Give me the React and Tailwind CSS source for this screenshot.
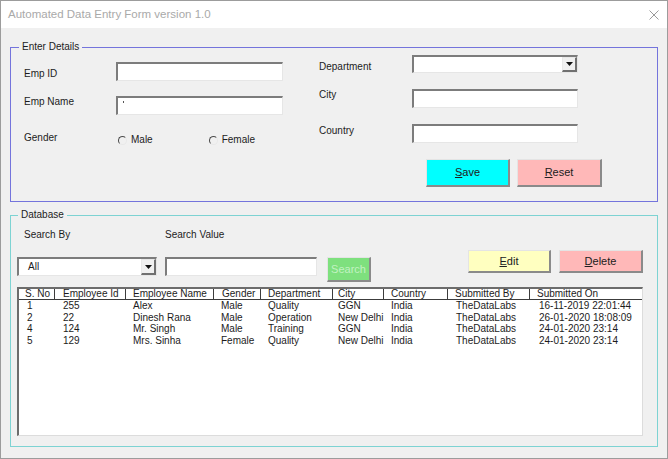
import React from 'react';

const columns = [
  { label: 'S. No', w: 35, hp: 'pl-[6px]', dp: 'pl-[8px]' },
  { label: 'Employee Id', w: 71, hp: 'pl-[8px]', dp: 'pl-[9px]' },
  { label: 'Employee Name', w: 88, hp: 'pl-[7px]', dp: 'pl-[8px]' },
  { label: 'Gender', w: 47, hp: 'pl-[8px]', dp: 'pl-[8px]' },
  { label: 'Department', w: 72, hp: 'pl-[7px]', dp: 'pl-[8px]' },
  { label: 'City', w: 51, hp: 'pl-[5px]', dp: 'pl-[6px]' },
  { label: 'Country', w: 64, hp: 'pl-[7px]', dp: 'pl-[8px]' },
  { label: 'Submitted By', w: 82, hp: 'pl-[7px]', dp: 'pl-[9px]' },
  { label: 'Submitted On', w: 113, hp: 'pl-[7px]', dp: 'pl-[10px]' },
];

const rows = [
  ['1', '255', 'Alex', 'Male', 'Quality', 'GGN', 'India', 'TheDataLabs', '16-11-2019 22:01:44'],
  ['2', '22', 'Dinesh Rana', 'Male', 'Operation', 'New Delhi', 'India', 'TheDataLabs', '26-01-2020 18:08:09'],
  ['4', '124', 'Mr. Singh', 'Male', 'Training', 'GGN', 'India', 'TheDataLabs', '24-01-2020 23:14'],
  ['5', '129', 'Mrs. Sinha', 'Female', 'Quality', 'New Delhi', 'India', 'TheDataLabs', '24-01-2020 23:14'],
];

const inputCls =
  'bg-white border-t-2 border-l-2 border-r border-b border-t-[#7c7c7c] border-l-[#7c7c7c] border-r-[#e6e6e6] border-b-[#e6e6e6]';

const btnCls =
  'flex items-center justify-center text-[11px] text-[#202020] border-t border-l border-r-2 border-b-2 border-t-[#e4e4e4] border-l-[#e4e4e4] border-r-[#8a8a8a] border-b-[#8a8a8a]';

function Arrow() {
  return (
    <div className="flex h-full w-[15px] items-center justify-center border-l border-t border-r-2 border-b-2 border-l-[#e8e8e8] border-t-[#e8e8e8] border-r-[#707070] border-b-[#707070] bg-[#f0f0f0]">
      <svg width="7" height="4" viewBox="0 0 7 4">
        <polygon points="0,0 7,0 3.5,4" fill="#111" />
      </svg>
    </div>
  );
}

function Radio({ label, className }) {
  return (
    <div className={`flex items-center ${className}`}>
      <span className="h-[9px] w-[9px] rounded-full border border-t-[#4a4a4a] border-l-[#4a4a4a] border-r-[#e8e8e8] border-b-[#e8e8e8]" />
      <span className="ml-[4px] text-[10px] leading-[12px]">{label}</span>
    </div>
  );
}

function U({ c, rest }) {
  return (
    <span>
      <span className="underline underline-offset-1">{c}</span>
      {rest}
    </span>
  );
}

export default function App() {
  return (
    <div className="flex h-[459px] w-[668px] flex-col overflow-hidden border border-[#9c9c9c] bg-[#f0f0f0] font-['Liberation_Sans',Arial,sans-serif] text-[#1c1c1c]">
      {/* title bar */}
      <div className="flex h-[27px] shrink-0 items-center justify-between bg-white pl-[7px] pr-[7px]">
        <span className="text-[11.5px] text-[#a9a9a9]">Automated Data Entry Form version 1.0</span>
        <svg width="10" height="10" viewBox="0 0 10 10" className="mr-[1px]">
          <path d="M0.5 0.5 L9.5 9.5 M9.5 0.5 L0.5 9.5" stroke="#9a9a9a" strokeWidth="1" />
        </svg>
      </div>

      {/* Enter Details */}
      <div className="relative ml-[9px] mt-[19px] flex h-[155px] w-[648px] shrink-0 border border-[#7474dc]">
        <span className="absolute -top-[7px] left-[8px] bg-[#f0f0f0] px-[3px] text-[10px] leading-[12px]">Enter Details</span>

        <div className="ml-[13px] flex w-[295px] flex-col pt-[14px]">
          <div className="flex items-start">
            <span className="mt-[6px] w-[92px] text-[10px] leading-[12px]">Emp ID</span>
            <div className={`h-[19px] w-[167px] ${inputCls}`} />
          </div>
          <div className="mt-[15px] flex items-start">
            <span className="mt-[0px] w-[92px] text-[10px] leading-[12px]">Emp Name</span>
            <div className={`relative h-[19px] w-[167px] ${inputCls}`}>
              <span className="absolute left-[5px] top-[3px] h-[2px] w-[1px] bg-[#555]" />
            </div>
          </div>
          <div className="mt-[17px] flex items-start">
            <span className="w-[94px] text-[10px] leading-[12px]">Gender</span>
            <Radio label="Male" className="mt-[2px]" />
            <Radio label="Female" className="mt-[2px] ml-[56px]" />
          </div>
        </div>

        <div className="flex flex-col pt-[7px]">
          <div className="flex items-start">
            <span className="mt-[6px] w-[93px] text-[10px] leading-[12px]">Department</span>
            <div className={`flex h-[18px] w-[166px] justify-end ${inputCls}`}>
              <Arrow />
            </div>
          </div>
          <div className="mt-[16px] flex items-start">
            <span className="w-[93px] text-[10px] leading-[12px]">City</span>
            <div className={`h-[19px] w-[166px] ${inputCls}`} />
          </div>
          <div className="mt-[16px] flex items-start">
            <span className="mt-[1px] w-[93px] text-[10px] leading-[12px]">Country</span>
            <div className={`h-[19px] w-[166px] ${inputCls}`} />
          </div>
          <div className="ml-[107px] mt-[16px] flex gap-[7px]">
            <button type="button" className={`h-[28px] w-[84px] bg-[#00ffff] ${btnCls}`}>
              <U c="S" rest="ave" />
            </button>
            <button type="button" className={`h-[28px] w-[85px] bg-[#ffb8b8] ${btnCls}`}>
              <U c="R" rest="eset" />
            </button>
          </div>
        </div>
      </div>

      {/* Database */}
      <div className="relative ml-[9px] mt-[13px] flex h-[232px] w-[648px] shrink-0 flex-col border border-[#7dd3d3] pt-[13px]">
        <span className="absolute -top-[7px] left-[7px] bg-[#f0f0f0] px-[3px] text-[10px] leading-[12px]">Database</span>

        <div className="flex text-[10px] leading-[12px]">
          <span className="ml-[13px] w-[141px]">Search By</span>
          <span>Search Value</span>
        </div>

        <div className="mt-[9px] flex h-[32px] items-start">
          <div className={`ml-[6px] mt-[7px] flex h-[19px] w-[140px] items-center justify-between ${inputCls}`}>
            <span className="pl-[9px] text-[10px] leading-[12px]">All</span>
            <Arrow />
          </div>
          <div className={`ml-[8px] mt-[7px] h-[19px] w-[152px] ${inputCls}`} />
          <button type="button" className={`ml-[10px] mt-[7px] h-[25px] w-[44px] bg-[#7ee07e] !text-[#c2f2c2] ${btnCls}`}>
            Search
          </button>
          <button type="button" className={`ml-[97px] h-[23px] w-[83px] bg-[#ffffc0] ${btnCls}`}>
            <U c="E" rest="dit" />
          </button>
          <button type="button" className={`ml-[8px] h-[23px] w-[84px] bg-[#ffb8b8] ${btnCls}`}>
            <U c="D" rest="elete" />
          </button>
        </div>

        <div className="ml-[6px] mt-[5px] h-[149px] w-[626px] border-t-2 border-l-2 border-r border-b border-t-[#6c6c6c] border-l-[#6c6c6c] border-r-[#dcdcdc] border-b-[#dcdcdc] bg-white text-[10px]">
          <div className="grid h-[11px] grid-cols-[35px_71px_88px_47px_72px_51px_64px_82px_113px] border-b border-[#3c3c3c] leading-[10px]">
            {columns.map((c, i) => (
              <div key={c.label} className={`whitespace-nowrap ${c.hp} ${i > 0 ? 'border-l border-[#3c3c3c]' : ''}`}>
                {c.label}
              </div>
            ))}
          </div>
          {rows.map((r, ri) => (
            <div key={ri} className="grid grid-cols-[35px_71px_88px_47px_72px_51px_64px_82px_113px] leading-[11.6px]">
              {r.map((v, ci) => (
                <div key={ci} className={`whitespace-nowrap ${columns[ci].dp}`}>
                  {v}
                </div>
              ))}
            </div>
          ))}
        </div>
      </div>
    </div>
  );
}
